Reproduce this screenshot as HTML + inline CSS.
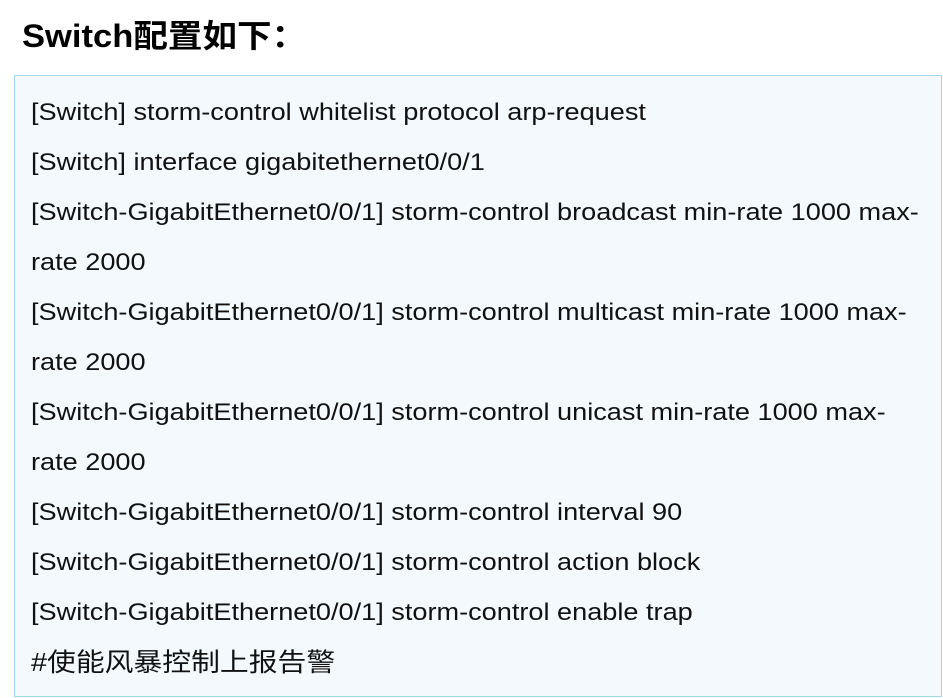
<!DOCTYPE html>
<html><head><meta charset="utf-8"><style>
html,body{margin:0;padding:0;background:#fff;width:943px;height:698px;overflow:hidden}
h1{position:absolute;left:22px;top:13px;margin:0;font:bold 32px "Liberation Sans","Noto Sans CJK SC",sans-serif;color:#000;line-height:46px;white-space:nowrap;transform:scaleX(1.08);transform-origin:left}
.box{position:absolute;left:14px;top:75px;width:926px;height:620px;background:#f3f9fd;border:1px solid #9fd6ee}
.l{position:absolute;left:16px;white-space:nowrap;font:24px "Liberation Sans","Noto Sans CJK SC",sans-serif;color:#111;line-height:50px;height:50px;transform:scaleX(1.13);transform-origin:left}
</style></head><body>
<h1>Switch配置如下：</h1>
<div class="box">
<div class="l" style="top:12px">[Switch] storm-control whitelist protocol arp-request</div>
<div class="l" style="top:62px">[Switch] interface gigabitethernet0/0/1</div>
<div class="l" style="top:112px">[Switch-GigabitEthernet0/0/1] storm-control broadcast min-rate 1000 max-</div>
<div class="l" style="top:162px">rate 2000</div>
<div class="l" style="top:212px">[Switch-GigabitEthernet0/0/1] storm-control multicast min-rate 1000 max-</div>
<div class="l" style="top:262px">rate 2000</div>
<div class="l" style="top:312px">[Switch-GigabitEthernet0/0/1] storm-control unicast min-rate 1000 max-</div>
<div class="l" style="top:362px">rate 2000</div>
<div class="l" style="top:412px">[Switch-GigabitEthernet0/0/1] storm-control interval 90</div>
<div class="l" style="top:462px">[Switch-GigabitEthernet0/0/1] storm-control action block</div>
<div class="l" style="top:512px">[Switch-GigabitEthernet0/0/1] storm-control enable trap</div>
<div class="l" style="top:562px;font-size:25.5px">#使能风暴控制上报告警</div>
</div>
</body></html>
